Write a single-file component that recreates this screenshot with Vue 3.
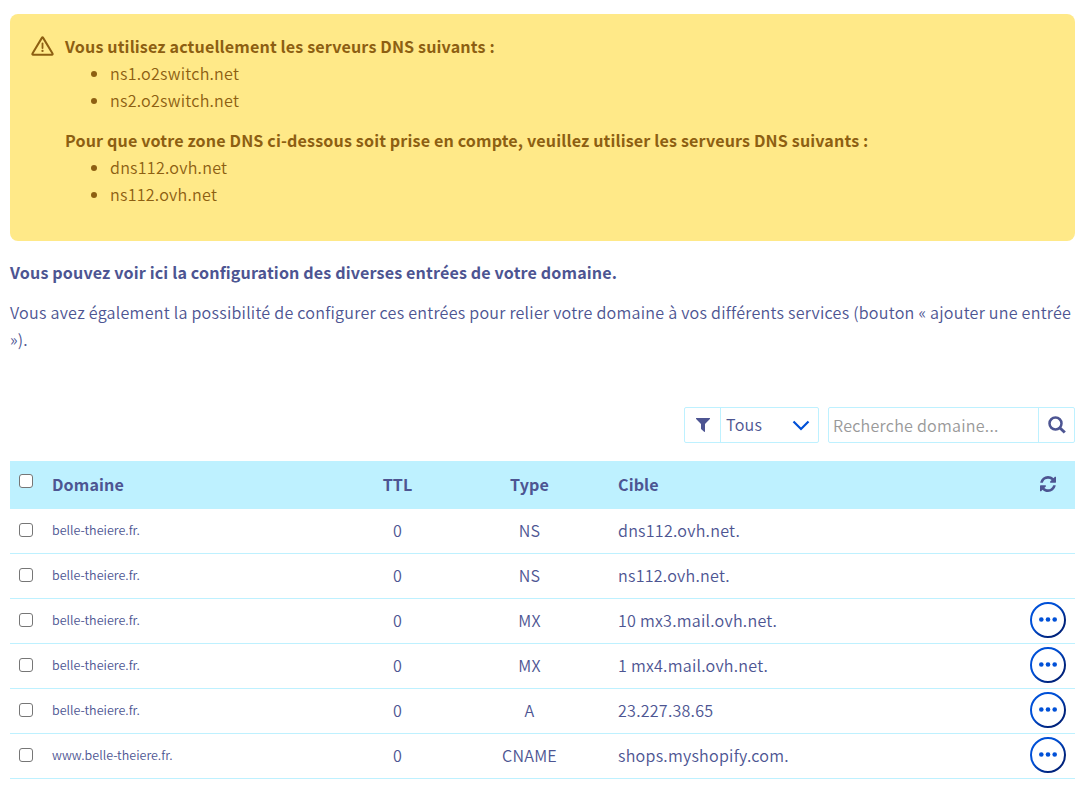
<script setup>
import { ref } from 'vue'

const currentServers = ['ns1.o2switch.net', 'ns2.o2switch.net']
const expectedServers = ['dns112.ovh.net', 'ns112.ovh.net']
const search = ref('')
const records = [
  { domain: 'belle-theiere.fr.', ttl: 0, type: 'NS', target: 'dns112.ovh.net.', menu: false },
  { domain: 'belle-theiere.fr.', ttl: 0, type: 'NS', target: 'ns112.ovh.net.', menu: false },
  { domain: 'belle-theiere.fr.', ttl: 0, type: 'MX', target: '10 mx3.mail.ovh.net.', menu: true },
  { domain: 'belle-theiere.fr.', ttl: 0, type: 'MX', target: '1 mx4.mail.ovh.net.', menu: true },
  { domain: 'belle-theiere.fr.', ttl: 0, type: 'A', target: '23.227.38.65', menu: true },
  { domain: 'www.belle-theiere.fr.', ttl: 0, type: 'CNAME', target: 'shops.myshopify.com.', menu: true },
]
</script>

<template>
  <main class="page">
    <section class="alert">
      <svg class="alert-icon" width="23" height="21" viewBox="0 0 24 22" fill="none" stroke="currentColor">
        <path d="M11.5 1.7 1.5 18.4c-.4.7-.1 1.3.6 1.3h19.8c.7 0 1-.6.6-1.3L12.5 1.7c-.3-.5-.7-.5-1 0Z" stroke-width="2.100" stroke-linejoin="round" />
        <path d="M12 7.800v4.800" stroke-width="1.900" stroke-linecap="round" />
        <circle cx="12" cy="15.600" r="1.200" fill="currentColor" stroke="none" />
      </svg>
      <div class="alert-body">
        <strong>Vous utilisez actuellement les serveurs DNS suivants :</strong>
        <ul>
          <li v-for="s in currentServers" :key="s">{{ s }}</li>
        </ul>
        <strong>Pour que votre zone DNS ci-dessous soit prise en compte, veuillez utiliser les serveurs DNS suivants :</strong>
        <ul>
          <li v-for="s in expectedServers" :key="s">{{ s }}</li>
        </ul>
      </div>
    </section>

    <p class="lead">Vous pouvez voir ici la configuration des diverses entrées de votre domaine.</p>
    <p class="text">Vous avez également la possibilité de configurer ces entrées pour relier votre domaine à vos différents services (bouton « ajouter une entrée »).</p>

    <div class="toolbar">
      <div class="group filter">
        <span class="addon">
          <svg width="14" height="14" viewBox="0 0 14 14" fill="currentColor"><path d="M.4 0h13.2c.5 0 .6.6.3.9L9 6v7.3c0 .5-.5.8-.9.4L5.300 11.200C5.100 11 5 10.800 5 10.500V6L.1.9C-.2.6 0 0 .4 0Z" /></svg>
        </span>
        <span class="select">
          <span class="value">Tous</span>
          <svg width="18" height="11" viewBox="0 0 18 11" fill="none" stroke="#0050d7" stroke-width="2.200"><path d="M1.500 1.500 9 9l7.500-7.500" /></svg>
        </span>
      </div>
      <div class="group search">
        <input v-model="search" type="text" placeholder="Recherche domaine..." />
        <button class="addon" type="button">
          <svg width="18" height="18" viewBox="0 0 18 18" fill="none" stroke="currentColor" stroke-width="2.500"><circle cx="7.500" cy="7.500" r="6" /><path d="m12 12 4.800 4.500" stroke-width="3" /></svg>
        </button>
      </div>
    </div>

    <div class="table">
      <div class="row head">
        <span class="check"><input type="checkbox" /></span>
        <span>Domaine</span>
        <span class="center">TTL</span>
        <span class="center">Type</span>
        <span class="target">Cible</span>
        <span class="action">
          <svg width="16" height="16" viewBox="0 0 1536 1536" fill="currentColor"><path d="M1511 928q0 5-1 7-64 268-268 434.500T764 1536q-146 0-282.500-55T238 1324l-129 129q-19 19-45 19t-45-19-19-45V960q0-26 19-45t45-19h448q26 0 45 19t19 45-19 45l-137 137q71 66 161 102t187 36q134 0 250-65t186-179q11-17 53-117 8-23 30-23h192q13 0 22.500 9.500t9.500 22.500zm25-800v448q0 26-19 45t-45 19h-448q-26 0-45-19t-19-45 19-45l138-138Q969 256 768 256q-134 0-250 65T332 500q-11 17-53 117-8 23-30 23H50q-13 0-22.500-9.500T18 608v-7q65-268 270-434.500T768 0q146 0 284 55.500T1297 212l130-129q19-19 45-19t45 19 19 45z" /></svg>
        </span>
      </div>
      <div v-for="(r, i) in records" :key="i" class="row">
        <span class="check"><input type="checkbox" /></span>
        <span class="domain">{{ r.domain }}</span>
        <span class="center">{{ r.ttl }}</span>
        <span class="center">{{ r.type }}</span>
        <span class="target">{{ r.target }}</span>
        <span class="action">
          <svg v-if="r.menu" width="36" height="36" viewBox="0 0 36 36">
            <defs>
              <linearGradient :id="'ring' + i" x1="0" y1="0" x2="1" y2="1">
                <stop offset=".4" stop-color="#0050d7" />
                <stop offset=".75" stop-color="#00237d" />
              </linearGradient>
            </defs>
            <circle cx="18" cy="18" r="17" fill="#fff" :stroke="`url(#ring${i})`" stroke-width="2" />
            <g fill="#0050d7"><circle cx="11.300" cy="17.500" r="2.300" /><circle cx="18" cy="17.500" r="2.300" /><circle cx="24.700" cy="17.500" r="2.300" /></g>
          </svg>
        </span>
      </div>
    </div>
  </main>
</template>

<style>
body {
  margin: 0;
  background: #fff;
}
</style>

<style scoped>
.page {
  box-sizing: border-box;
  padding: 14px 13px 0 10px;
  font-family: "Noto Sans CJK SC", "Noto Sans", sans-serif;
  font-size: 16.1px;
  font-weight: 350;
  letter-spacing: 0.235px;
  line-height: 27px;
  color: #4d5592;
}
.alert {
  box-sizing: border-box;
  display: flex;
  height: 227px;
  padding: 19px 21px;
  border-radius: 8px;
  background: #ffe988;
  color: #8d5f12;
}
.alert-icon {
  flex: none;
  margin: 3px 11px 0 0;
}
.alert-body strong {
  display: block;
  font-weight: 700;
  letter-spacing: 0.14px;
}
ul {
  margin: 0 0 13px;
  padding: 0 0 0 45px;
  list-style: none;
}
li {
  display: flex;
  align-items: center;
}
li::before {
  content: "";
  width: 6px;
  height: 6px;
  margin: 0 13px 0 -19px;
  border-radius: 50%;
  background: currentColor;
}
p {
  margin: 0;
}
.lead {
  margin-top: 18px;
  font-weight: 700;
  letter-spacing: 0.14px;
}
.text {
  margin-top: 13px;
}
.toolbar {
  display: flex;
  justify-content: flex-end;
  gap: 9px;
  margin-top: 54px;
}
.group {
  box-sizing: border-box;
  display: flex;
  height: 36px;
  border: 1px solid #bef1ff;
  border-radius: 2px;
}
.filter {
  width: 135px;
}
.search {
  width: 247px;
}
.addon {
  flex: none;
  display: flex;
  align-items: center;
  justify-content: center;
  box-sizing: border-box;
  width: 36px;
  padding: 0;
  border: 0;
  background: none;
  color: #4d5592;
}
.filter .addon {
  border-right: 1px solid #bef1ff;
}
.search .addon {
  border-left: 1px solid #bef1ff;
}
.select {
  flex: 1;
  display: flex;
  align-items: center;
  justify-content: space-between;
  padding: 0 8px 0 5px;
}
.value {
  padding-bottom: 2px;
}
.search input {
  flex: 1;
  min-width: 0;
  padding: 0 4px;
  border: 0;
  outline: 0;
  background: none;
  font: inherit;
  letter-spacing: inherit;
  color: inherit;
}
.search input::placeholder {
  color: #999;
  opacity: 1;
}
.table {
  margin-top: 18px;
}
.row {
  box-sizing: border-box;
  display: grid;
  grid-template-columns: 42px 291px 109px 155px 1fr 55px;
  align-items: center;
  height: 45px;
  padding-bottom: 1px;
  border-bottom: 1px solid #bef1ff;
}
.head {
  height: 48px;
  padding-bottom: 0;
  background: #bef1ff;
  font-weight: 700;
  letter-spacing: 0.1px;
}
.center {
  text-align: center;
}
.target {
  padding-left: 11px;
}
.check {
  display: flex;
  padding: 0 0 1px 9px;
}
.head .check {
  padding-bottom: 8px;
}
.check input {
  appearance: none;
  box-sizing: border-box;
  width: 14px;
  height: 14px;
  margin: 0;
  border: 1px solid #767676;
  border-radius: 3px;
  background: #fff;
}
.domain {
  padding-bottom: 3px;
  font-size: 12.500px;
  letter-spacing: 0.01px;
}
.action {
  display: flex;
  justify-content: center;
  padding-bottom: 2px;
}
</style>
